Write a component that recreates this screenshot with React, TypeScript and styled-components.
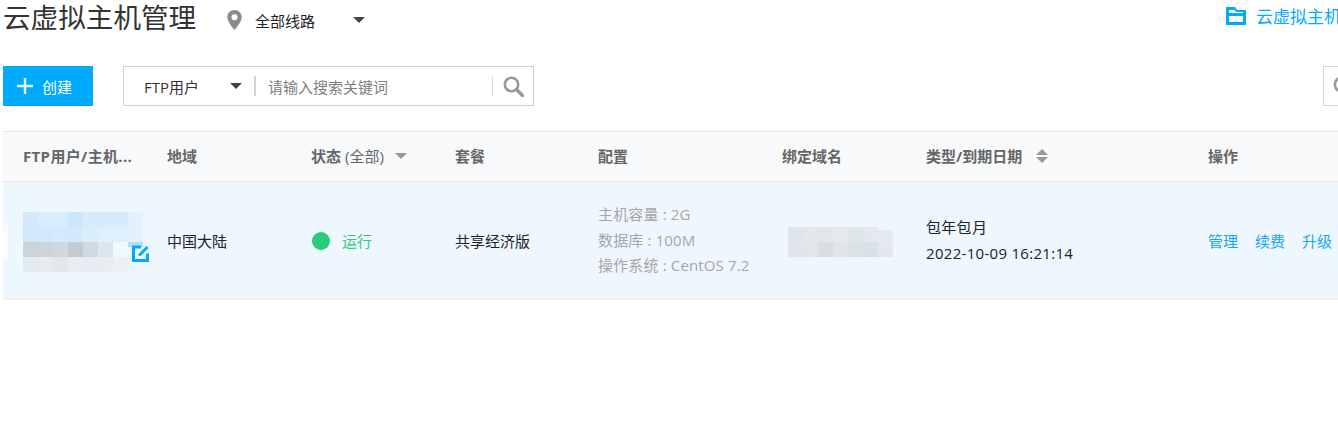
import React from "react";
import styled, { createGlobalStyle } from "styled-components";

const GlobalStyle = createGlobalStyle`
  html, body {
    margin: 0;
    padding: 0;
    background: #fff;
    overflow: hidden;
  }
  body {
    font-family: "Open Sans", "Noto Sans CJK SC", sans-serif;
    font-size: 15px;
    color: #222;
  }
`;

const BLUE = "#00aaff";
const ROW_BG = "#eff7fe";

const Page = styled.div`
  width: 1500px;
  height: 435px;
  padding-left: 3px;
  box-sizing: border-box;
  overflow: hidden;
`;

const TopBar = styled.div`
  display: flex;
  align-items: center;
  height: 34px;
`;

const Title = styled.h1`
  margin: 0;
  font-size: 27.6px;
  font-weight: 400;
  line-height: 34px;
  color: #333;
  width: 224px;
`;

const RegionSelect = styled.div`
  display: flex;
  align-items: center;
  width: 140px;
  height: 34px;
`;

const Pin = styled.svg`
  margin-top: 5px;
`;

const RegionText = styled.span`
  margin-left: 13px;
  width: 98px;
  padding-top: 6px;
`;

const Caret = styled.i<{ $color?: string; $left?: number; $top?: number }>`
  display: block;
  width: 0;
  height: 0;
  margin-left: ${(p) => p.$left ?? 0}px;
  margin-top: ${(p) => p.$top ?? 0}px;
  border-style: solid;
  border-width: 6.5px 6.5px 0;
  border-color: ${(p) => p.$color ?? "#444"} transparent transparent;
`;

const FolderLink = styled.a`
  display: flex;
  align-items: center;
  margin-left: auto;
  width: 274px;
  padding-bottom: 3px;
  font-size: 17px;
  color: ${BLUE};
  white-space: nowrap;
  gap: 10px;
`;

const Toolbar = styled.div`
  display: flex;
  align-items: center;
  margin-top: 32px;
  height: 40px;
`;

const CreateButton = styled.button`
  display: flex;
  align-items: center;
  gap: 9px;
  width: 90px;
  height: 40px;
  border: 0;
  padding: 0 0 0 14px;
  background: ${BLUE};
  color: #fff;
  font: inherit;
`;

const SearchBox = styled.div`
  display: flex;
  align-items: center;
  width: 411px;
  height: 40px;
  margin-left: 30px;
  border: 1px solid #cfcfcf;
  box-sizing: border-box;
`;

const SearchType = styled.div`
  display: flex;
  align-items: center;
  width: 132px;
  height: 20px;
  padding-left: 20px;
  box-sizing: border-box;
  border-right: 2px solid #d4d4d4;
  color: #333;
`;

const SearchTypeLabel = styled.span`
  width: 86px;
`;

const SearchPlaceholder = styled.span`
  width: 224px;
  margin-left: 12px;
  color: #808080;
`;

const SearchButton = styled.div`
  display: flex;
  align-items: center;
  height: 20px;
  padding-left: 10px;
  border-left: 1px solid #d8d8d8;
`;

const ExtraSearch = styled.div`
  display: flex;
  align-items: center;
  width: 100px;
  height: 40px;
  margin-left: 789px;
  padding-left: 9px;
  border: 1px solid #d6d6d6;
  box-sizing: border-box;
`;

const COLUMNS = "144px 144px 144px 143px 184px 144px 282px 1fr";

const Table = styled.div`
  margin-top: 25px;
`;

const HeadRow = styled.div`
  display: grid;
  grid-template-columns: ${COLUMNS};
  align-items: center;
  height: 51px;
  padding-bottom: 2px;
  box-sizing: border-box;
  background: #f7f9fb;
  border-top: 1px solid #e3e6ea;
  border-bottom: 1px solid #e3e6ea;
`;

const HeadCell = styled.div<{ $spacing?: number }>`
  display: flex;
  align-items: center;
  padding-left: 20px;
  font-weight: 700;
  color: #666;
  white-space: nowrap;
  letter-spacing: ${(p) => p.$spacing ?? 0}px;
`;

const HeadLight = styled.span`
  font-weight: 400;
  margin-left: 4px;
`;

const BodyRow = styled.div`
  display: grid;
  grid-template-columns: ${COLUMNS};
  align-items: center;
  height: 118px;
  box-sizing: border-box;
  background: ${ROW_BG};
  border-bottom: 1px solid #e8ecf0;
`;

const Cell = styled.div<{ $indent?: number }>`
  padding-left: ${(p) => p.$indent ?? 20}px;
  white-space: nowrap;
  position: relative;
`;

const NameCell = styled(Cell)`
  &::before {
    content: "";
    position: absolute;
    left: 0;
    top: 12px;
    width: 5px;
    height: 42px;
    background: #f8fcfe;
    clip-path: polygon(0 6px, 100% 0, 100% 100%, 0 36px);
  }
`;

const Mosaic = styled.div<{ $cols: number }>`
  display: grid;
  grid-template-columns: repeat(${(p) => p.$cols}, 15px);
  grid-auto-rows: 15px;
  width: max-content;
  margin-top: 3px;
`;

const Pixel = styled.span<{ $bg: string }>`
  background: ${(p) => p.$bg};
`;

const EditIcon = styled.svg`
  position: absolute;
  left: 129px;
  top: 36px;
`;

const Status = styled.div`
  display: flex;
  align-items: center;
  color: #2ecc7f;
`;

const Dot = styled.i`
  width: 18px;
  height: 18px;
  margin: 0 12px 0 1px;
  border-radius: 50%;
  background: #28cc7a;
`;

const Lines = styled.div<{ $muted?: boolean; $spacing?: number }>`
  line-height: 25.5px;
  letter-spacing: ${(p) => p.$spacing ?? 0}px;
  color: ${(p) => (p.$muted ? "#a6a6a6" : "#222")};
`;

const Actions = styled.div`
  display: flex;
  gap: 17px;
`;

const ActionLink = styled.a`
  color: #16a5f5;
`;

const SortIcon = styled.span`
  display: flex;
  flex-direction: column;
  gap: 2px;
  margin-left: 14px;
`;

const UpCaret = styled.i`
  width: 0;
  height: 0;
  border-style: solid;
  border-width: 0 6.5px 6.5px;
  border-color: transparent transparent #999;
`;

const nameMask = [
  "#d3e9fb", "#d8edfb", "#d8ecfb", "#cce7fc", "#d6ebfc", "#d5ebfc", "#d6ebfb", "#e2f1fb",
  "#d2e8fa", "#d0e8f9", "#d4eafb", "#d3e9fa", "#daedfb", "#e0f0fb", "#def0fb", "#e3f1fb",
  "#cdd4d8", "#ced5da", "#d1d7db", "#c4cbce", "#d1d9de", "#dde4ea", "#f2f8fd",
  `linear-gradient(#b0dffd 5px, ${ROW_BG} 5px)`,
  "#e4eaef", "#e5ebef", "#e1e7eb", "#e7edf1", "#e6ecf1", "#e7edf1", "#eaf0f4", ROW_BG,
];

const domainMask = [
  "#dfe5ea", "#e2e8ec", "#e1e7eb", "#e3e9ec", "#dfe6e9", "#e2e8ed",
  `linear-gradient(${ROW_BG} 3px, #e4eaf0 3px)`,
  "#dfe5ea", "#e0e6ea", "#d8dee2", "#dfe5e9", "#dce3e7", "#dae1e6", "#e2e8ee",
];

function SearchGlyph() {
  return (
    <svg width="21" height="21" viewBox="0 0 21 21" fill="none">
      <circle cx="8.5" cy="8.5" r="6.7" stroke="#999" strokeWidth="2.6" />
      <path d="M13.5 13.5L19.5 19.5" stroke="#999" strokeWidth="3.4" strokeLinecap="round" />
    </svg>
  );
}

export default function App() {
  return (
    <Page>
      <GlobalStyle />
      <TopBar>
        <Title>云虚拟主机管理</Title>
        <RegionSelect>
          <Pin width="15" height="20" viewBox="0 0 15 20">
            <path
              fillRule="evenodd"
              fill="#8c8c8c"
              d="M7.5 0C3.4 0 .3 3.1.3 7.1c0 4.6 5 10.3 7.2 12.9 2.2-2.6 7.2-8.3 7.2-12.9C14.7 3.1 11.6 0 7.5 0zm0 4.2a3 3 0 1 1 0 6 3 3 0 0 1 0-6z"
            />
          </Pin>
          <RegionText>全部线路</RegionText>
          <Caret $top={5} />
        </RegionSelect>
        <FolderLink>
          <svg width="20" height="18" viewBox="0 0 20 18">
            <path
              fillRule="evenodd"
              fill={BLUE}
              d="M0 0h9l2 3h9v15H0zM3 3v3h14V5H10L8.500 3zM3 9v6h14V9z"
            />
          </svg>
          云虚拟主机
        </FolderLink>
      </TopBar>

      <Toolbar>
        <CreateButton>
          <svg width="16" height="16" viewBox="0 0 16 16">
            <path d="M8 0v16M0 8h16" stroke="#e6f6ff" strokeWidth="2.4" />
          </svg>
          创建
        </CreateButton>
        <SearchBox>
          <SearchType>
            <SearchTypeLabel>FTP用户</SearchTypeLabel>
            <Caret />
          </SearchType>
          <SearchPlaceholder>请输入搜索关键词</SearchPlaceholder>
          <SearchButton>
            <SearchGlyph />
          </SearchButton>
        </SearchBox>
        <ExtraSearch>
          <SearchGlyph />
        </ExtraSearch>
      </Toolbar>

      <Table>
        <HeadRow>
          <HeadCell $spacing={0.35}>FTP用户/主机...</HeadCell>
          <HeadCell>地域</HeadCell>
          <HeadCell>
            状态<HeadLight>(全部)</HeadLight>
            <Caret $color="#999" $left={11} />
          </HeadCell>
          <HeadCell>套餐</HeadCell>
          <HeadCell>配置</HeadCell>
          <HeadCell>绑定域名</HeadCell>
          <HeadCell>
            类型/到期日期
            <SortIcon>
              <UpCaret />
              <Caret $color="#999" />
            </SortIcon>
          </HeadCell>
          <HeadCell>操作</HeadCell>
        </HeadRow>
        <BodyRow>
          <NameCell>
            <Mosaic $cols={8}>
              {nameMask.map((c, i) => (
                <Pixel key={i} $bg={c} />
              ))}
            </Mosaic>
            <EditIcon width="18" height="17" viewBox="0 0 18 17" fill="none">
              <path d="M9 2H1.500v13.500H15.500V8.500" stroke={BLUE} strokeWidth="3" />
              <path d="M7 10.500L15.500 2" stroke={BLUE} strokeWidth="3" />
            </EditIcon>
          </NameCell>
          <Cell>中国大陆</Cell>
          <Cell>
            <Status>
              <Dot />
              运行
            </Status>
          </Cell>
          <Cell>共享经济版</Cell>
          <Cell>
            <Lines $muted $spacing={0.15}>
              主机容量 : 2G
              <br />
              数据库 : 100M
              <br />
              操作系统 : CentOS 7.2
            </Lines>
          </Cell>
          <Cell $indent={26}>
            <Mosaic $cols={7}>
              {domainMask.map((c, i) => (
                <Pixel key={i} $bg={c} />
              ))}
            </Mosaic>
          </Cell>
          <Cell>
            <Lines $spacing={0.3}>
              包年包月
              <br />
              2022-10-09 16:21:14
            </Lines>
          </Cell>
          <Cell>
            <Actions>
              <ActionLink>管理</ActionLink>
              <ActionLink>续费</ActionLink>
              <ActionLink>升级</ActionLink>
            </Actions>
          </Cell>
        </BodyRow>
      </Table>
    </Page>
  );
}
